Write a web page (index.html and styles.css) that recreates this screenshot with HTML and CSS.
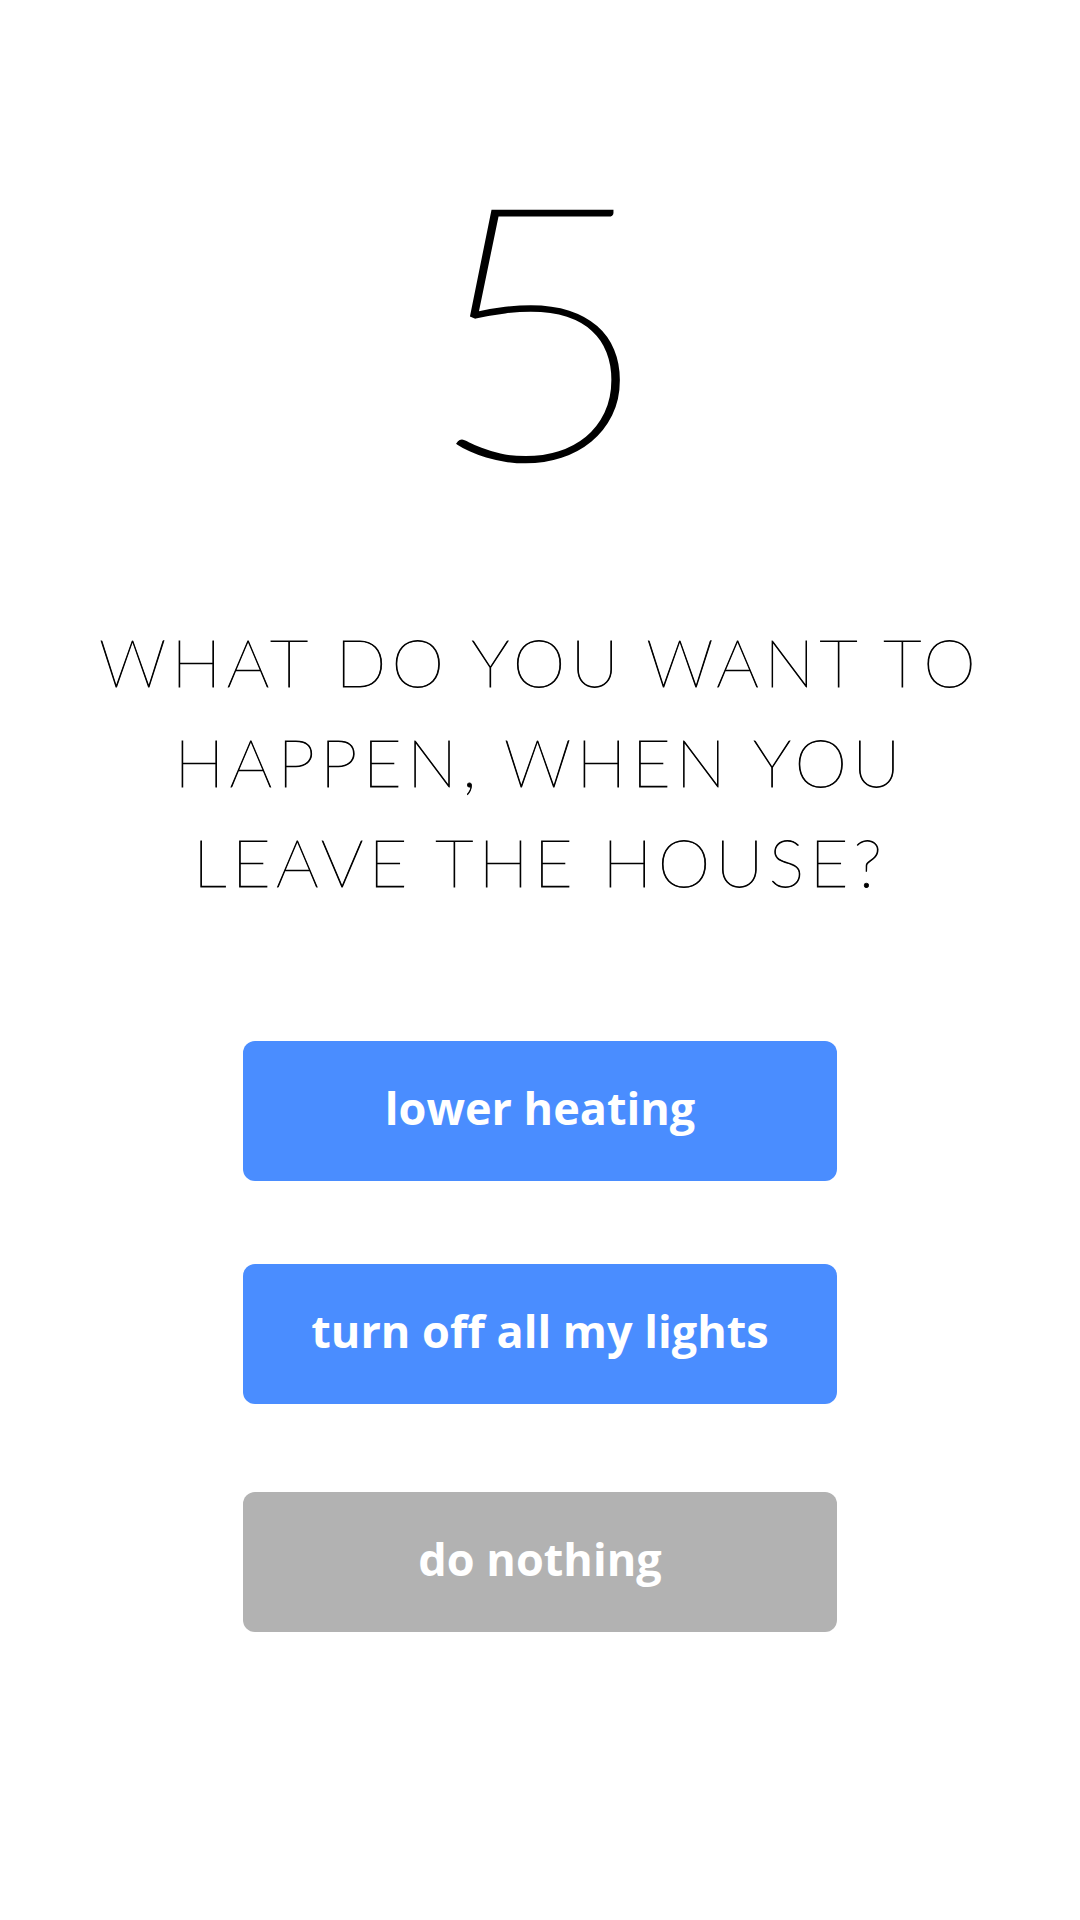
FILE: index.html
```html
<!DOCTYPE html>
<html>
<head>
<meta charset="utf-8">
<link rel="stylesheet" href="styles.css">
</head>
<body>
<main class="screen">
  <div class="step">5</div>
  <h1 class="question">WHAT DO YOU WANT TO<br>HAPPEN, WHEN YOU<br>LEAVE THE HOUSE?</h1>
  <div class="choices">
    <button class="choice choice-primary">lower heating</button>
    <button class="choice choice-primary choice-second">turn off all my lights</button>
    <button class="choice choice-muted">do nothing</button>
  </div>
</main>
</body>
</html>
```
FILE: styles.css
```css
html, body {
  margin: 0;
  padding: 0;
  background: #ffffff;
}
.screen {
  width: 1080px;
  height: 1920px;
  display: flex;
  flex-direction: column;
  align-items: center;
}
.step {
  margin-top: 147px;
  height: 350px;
  font-family: "Lato", "DejaVu Sans", sans-serif;
  font-weight: 100;
  font-size: 354px;
  line-height: 350px;
  color: #000;
  -webkit-text-stroke: 3px #000;
  transform: scaleX(1.12);
}
.question {
  margin: 114px 0 0 0;
  font-family: "Lato", "DejaVu Sans", sans-serif;
  font-weight: 100;
  font-size: 67px;
  line-height: 100px;
  letter-spacing: 5.2px;
  text-align: center;
  color: #000;
  -webkit-text-stroke: 0.8px #000;
}
.choices {
  margin-top: 130px;
  display: flex;
  flex-direction: column;
  align-items: center;
}
.choice {
  width: 594px;
  height: 140px;
  border: none;
  border-radius: 12px;
  font-family: "Open Sans", "Liberation Sans", sans-serif;
  font-weight: 700;
  font-size: 45px;
  color: #ffffff;
  display: flex;
  align-items: center;
  justify-content: center;
  padding: 0 0 8px 0;
}
.choice-primary {
  background: #4a8dff;
}
.choice-second {
  margin-top: 83px;
}
.choice-muted {
  margin-top: 88px;
  background: #b2b2b2;
}
```
